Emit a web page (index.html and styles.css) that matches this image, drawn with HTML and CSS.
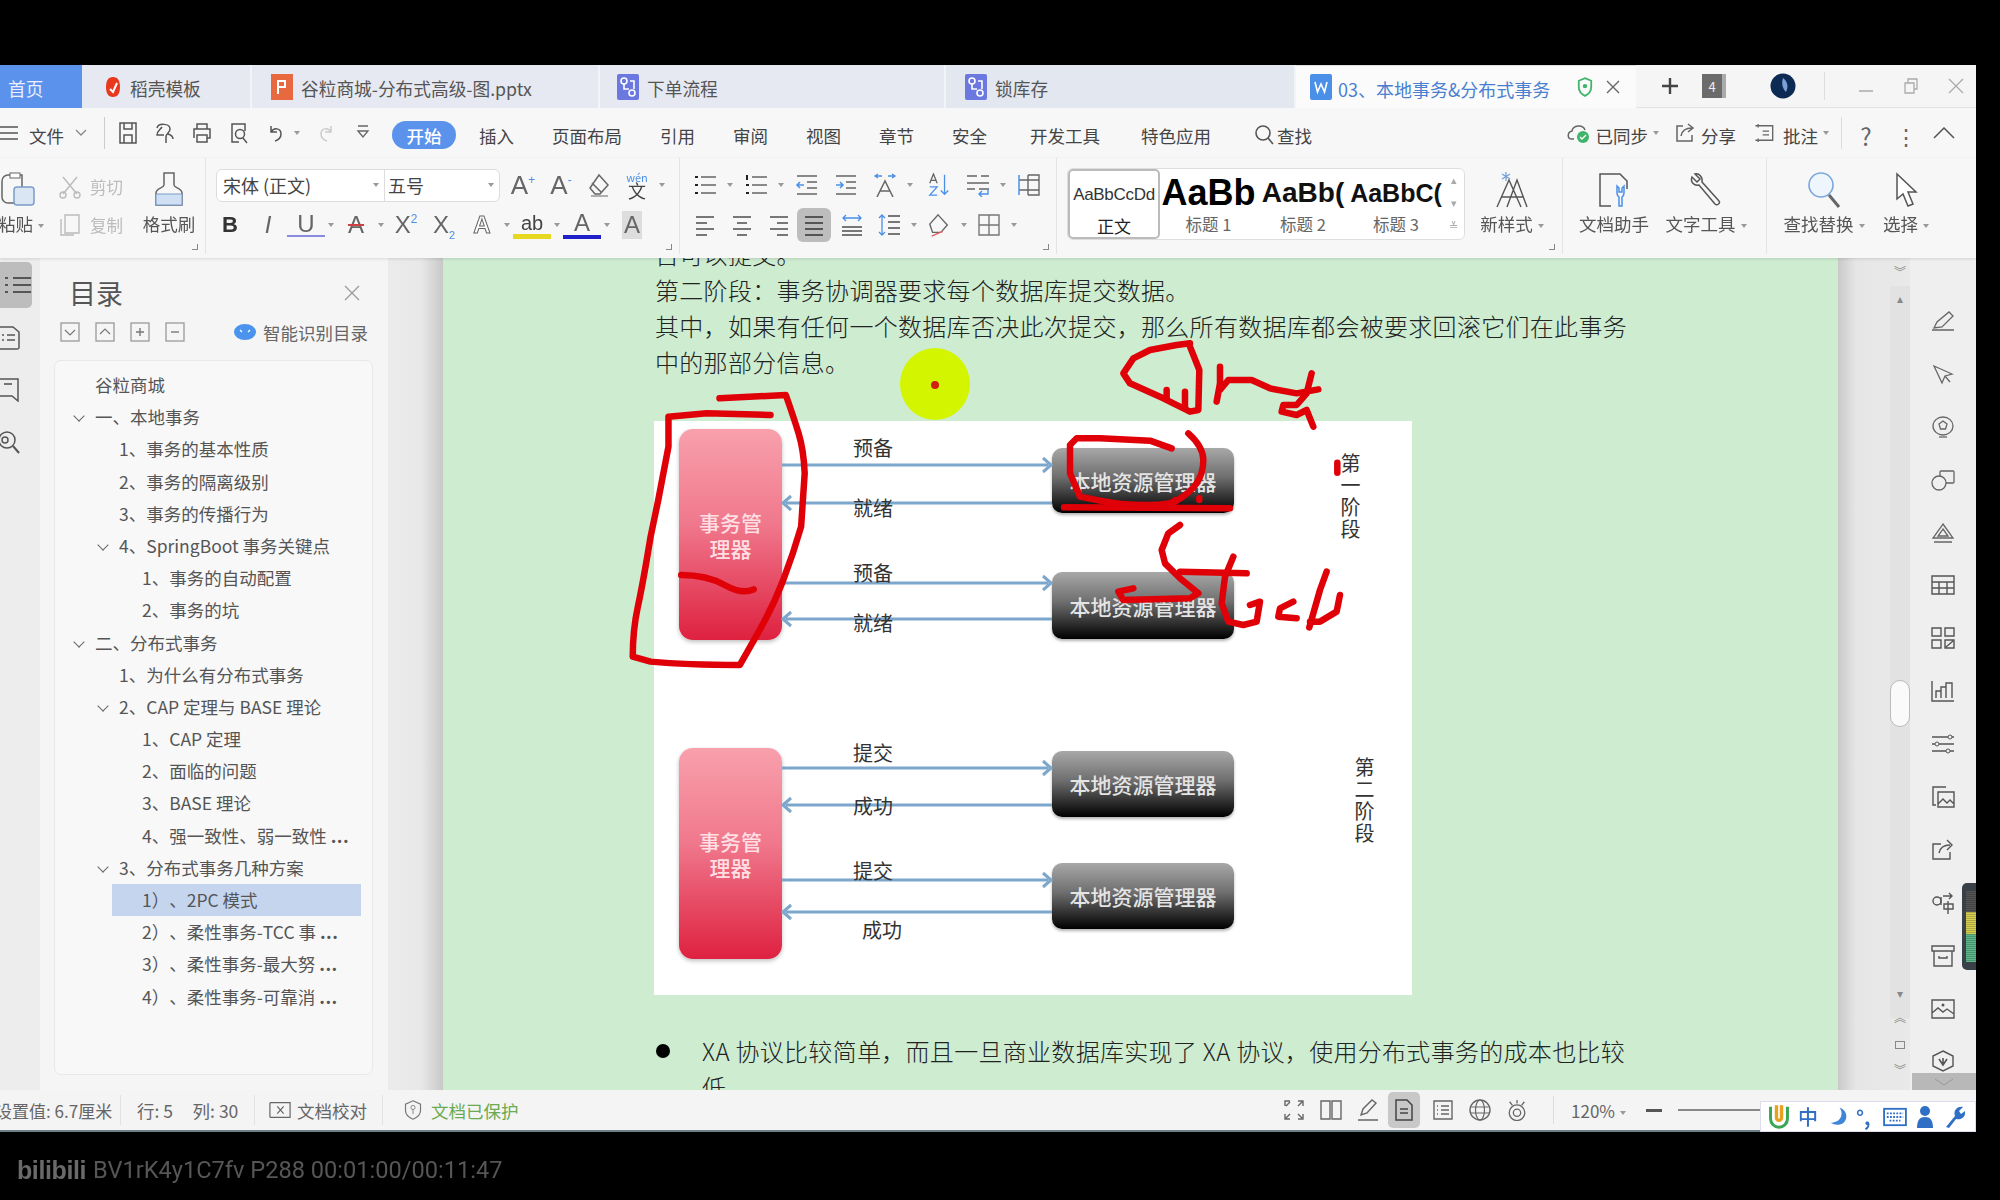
FILE: index.html
```html
<!DOCTYPE html>
<html lang="zh-CN">
<head>
<meta charset="utf-8">
<title>WPS</title>
<link rel="stylesheet" href="styles.css">
</head>
<body>
<div class="page">
  <div class="window">
    <div class="tabbar">
      <div class="tab home">首页</div>
      <div class="tab t2"><svg class="ti" viewBox="0 0 16 22"><path d="M8 1C3 1 1 5 1 11s2 10 7 10 7-4 7-10S13 1 8 1z" fill="#e8391f"/><path d="M5 13l3 3 4-9" fill="none" stroke="#fff" stroke-width="2"/></svg>稻壳模板</div>
      <div class="tab t3"><svg class="ti" viewBox="0 0 22 26"><rect width="22" height="26" fill="#e8693f"/><path d="M7 20V7h7v6H7" fill="none" stroke="#fff" stroke-width="2"/></svg>谷粒商城-分布式高级-图.pptx</div>
      <div class="tab t4"><svg class="ti" viewBox="0 0 22 26"><rect width="22" height="26" rx="2" fill="#6a78e0"/><circle cx="7" cy="7" r="3" fill="none" stroke="#fff" stroke-width="1.6"/><circle cx="15" cy="19" r="3" fill="none" stroke="#fff" stroke-width="1.6"/><path d="M7 10v5h5M13 7h4v8" fill="none" stroke="#fff" stroke-width="1.6"/></svg>下单流程</div>
      <div class="tab t5"><svg class="ti" viewBox="0 0 22 26"><rect width="22" height="26" rx="2" fill="#6a78e0"/><circle cx="7" cy="7" r="3" fill="none" stroke="#fff" stroke-width="1.6"/><circle cx="15" cy="19" r="3" fill="none" stroke="#fff" stroke-width="1.6"/><path d="M7 10v5h5M13 7h4v8" fill="none" stroke="#fff" stroke-width="1.6"/></svg>锁库存</div>
      <div class="tab active"><svg class="ti" viewBox="0 0 22 26"><rect width="22" height="26" rx="2" fill="#4a90e8"/><path d="M5 8l2.5 10L11 10l3.5 8L17 8" fill="none" stroke="#fff" stroke-width="1.6"/></svg><span class="atext">03、本地事务&amp;分布式事务</span><svg class="shield" viewBox="0 0 18 22"><path d="M9 1l7 3v7c0 5-3 8-7 10-4-2-7-5-7-10V4z" fill="none" stroke="#3fb56b" stroke-width="2"/><circle cx="9" cy="10" r="2.5" fill="#3fb56b"/></svg><svg class="tx" viewBox="0 0 16 16"><path d="M2 2l12 12M14 2L2 14" stroke="#666" stroke-width="1.4"/></svg></div>
      <div class="tabtools">
        <svg class="plus" viewBox="0 0 18 18"><path d="M9 1v16M1 9h16" stroke="#444" stroke-width="2.4"/></svg>
        <span class="count">4</span>
        <svg class="avatar" viewBox="0 0 26 26"><circle cx="13" cy="13" r="12.5" fill="#0d2a55"/><path d="M13 5c4 3 6 8 3 14-3-3-5-8-3-14z" fill="#7aa2d8"/></svg>
        <span class="vr"></span>
        <svg class="wmin" viewBox="0 0 16 16"><path d="M1 13h14" stroke="#aaa" stroke-width="1.5"/></svg>
        <svg class="wres" viewBox="0 0 16 16"><path d="M2 5h9v10H2zM5 5V1h9v10h-3" fill="none" stroke="#aaa" stroke-width="1.3"/></svg>
        <svg class="wcl" viewBox="0 0 16 16"><path d="M1 1l14 14M15 1L1 15" stroke="#aaa" stroke-width="1.3"/></svg>
      </div>
    </div>

    <div class="menubar">
      <svg class="burger" viewBox="0 0 18 14"><path d="M0 1h18M0 7h18M0 13h18" stroke="#555" stroke-width="1.5"/></svg>
      <span class="file">文件</span>
      <svg class="chev" viewBox="0 0 12 8"><path d="M1 1l5 5 5-5" fill="none" stroke="#888" stroke-width="1.3"/></svg>
      <span class="vr menu-vr"></span>
      <span class="q"><svg viewBox="0 0 20 22" class="qi"><path d="M2 1h16v20H2zM6 1v6h8V1M6 21v-8h8v8" fill="none" stroke="#555" stroke-width="1.5"/></svg></span>
      <span class="q"><svg viewBox="0 0 20 22" class="qi"><path d="M2 6c1-5 13-5 13 1 0 4-4 4-4 8v6M7 5c-2 3-5 4-5 8h7M13 12c3 1 5 2 5 5" fill="none" stroke="#555" stroke-width="1.5"/></svg></span>
      <span class="q"><svg viewBox="0 0 20 22" class="qi"><path d="M5 7V2h10v5M2 16V7h16v9h-3M5 13h10v7H5z" fill="none" stroke="#555" stroke-width="1.5"/></svg></span>
      <span class="q"><svg viewBox="0 0 20 22" class="qi"><path d="M16 9V2H3v18h7" fill="none" stroke="#555" stroke-width="1.5"/><circle cx="11" cy="12" r="4.5" fill="none" stroke="#555" stroke-width="1.5"/><path d="M14 16l4 5" stroke="#555" stroke-width="1.5"/></svg></span>
      <span class="q"><svg viewBox="0 0 20 22" class="qi"><path d="M5 4v6h6M5 10c3-5 10-4 10 2 0 4-3 6-6 7" fill="none" stroke="#555" stroke-width="1.5"/></svg></span>
      <span class="caret cq"></span>
      <span class="q"><svg viewBox="0 0 20 22" class="qi"><path d="M15 4v6H9M15 10c-3-5-10-4-10 2 0 4 3 6 6 7" fill="none" stroke="#ccc" stroke-width="1.5"/></svg></span>
      <span class="q"><svg viewBox="0 0 14 18" class="qs"><path d="M2 2h10M2 7l5 6 5-6z" fill="none" stroke="#666" stroke-width="1.3"/></svg></span>
      <span class="pill">开始</span>
      <nav class="mitems">
        <span>插入</span><span>页面布局</span><span>引用</span><span>审阅</span><span>视图</span><span>章节</span><span>安全</span><span class="mdev">开发工具</span><span class="mfeat">特色应用</span>
        <span class="findm"><svg viewBox="0 0 20 22" class="qi"><circle cx="9" cy="9" r="7" fill="none" stroke="#555" stroke-width="1.6"/><path d="M14 14l5 6" stroke="#555" stroke-width="1.6"/></svg>查找</span>
      </nav>
      <div class="mright">
        <svg class="cloud" viewBox="0 0 26 22"><path d="M7 17H5c-5 0-5-7 0-8 1-6 11-7 13-1" fill="none" stroke="#666" stroke-width="1.5"/><circle cx="16" cy="15" r="6" fill="#3fb56b"/><path d="M13 15l2 2 4-4" fill="none" stroke="#fff" stroke-width="1.4"/></svg>
        <span>已同步</span><span class="caret"></span>
        <svg class="mri share" viewBox="0 0 20 20"><path d="M8 3H2v15h15v-6M6 13c1-6 5-8 11-8M13 1l5 4-5 4" fill="none" stroke="#666" stroke-width="1.5"/></svg>
        <span>分享</span>
        <svg class="mri note" viewBox="0 0 24 22"><path d="M5 3h16v16H5M2 3h6M2 19h6M5 1v4M5 17v4M10 9h7M10 13h7" fill="none" stroke="#666" stroke-width="1.5"/></svg>
        <span>批注</span><span class="caret"></span>
        <span class="vr mr-vr"></span>
        <span class="help">?</span>
        <span class="dots">⋮</span>
        <svg class="up" viewBox="0 0 22 12"><path d="M1 11L11 1l10 10" fill="none" stroke="#555" stroke-width="1.5"/></svg>
      </div>
    </div>

    <div class="toolbar">
      <section class="grp g-clip">
        <div class="bigbtn paste">
          <svg viewBox="0 0 36 34" class="bigi"><path d="M8 3h14v28H8a6 6 0 0 1-6-6V9a6 6 0 0 1 6-6z" fill="none" stroke="#666" stroke-width="1.5"/><rect x="10" y="1" width="10" height="5" fill="#fff" stroke="#666"/><rect x="14" y="15" width="20" height="18" rx="3" fill="#dbe6f5" stroke="#7a9cc8" stroke-width="1.5"/></svg>
          <span class="clipl">粘贴<i class="caret"></i></span>
        </div>
        <div class="cc">
          <div class="ccrow"><svg viewBox="0 0 24 24" class="cci"><path d="M5 2l14 17M19 2L5 19" stroke="#bbb" stroke-width="1.4"/><circle cx="5" cy="20" r="3" fill="none" stroke="#bbb" stroke-width="1.4"/><circle cx="19" cy="20" r="3" fill="none" stroke="#bbb" stroke-width="1.4"/></svg>剪切</div>
          <div class="ccrow"><svg viewBox="0 0 24 24" class="cci"><path d="M7 2h14v18H7z M3 6v16h13" fill="none" stroke="#bbb" stroke-width="1.4"/></svg>复制</div>
        </div>
        <div class="bigbtn brush">
          <svg viewBox="0 0 32 34" class="bigi"><path d="M11 1h10v12c0 3 8 3 8 8v12H3V21c0-5 8-5 8-8z" fill="none" stroke="#666" stroke-width="1.5"/><path d="M3 22h26v11H3z" fill="#cfe0f5" stroke="#7a9cc8"/></svg>
          <span>格式刷</span>
        </div>
        <i class="launch"></i>
      </section>

      <section class="grp g-font">
        <div class="row">
          <div class="combo"><span class="cf">宋体 (正文)<i class="caret"></i></span><span class="cs">五号<i class="caret"></i></span></div>
          <span class="b"><span class="gl a">A<sup>+</sup></span></span>
          <span class="b"><span class="gl a">A<sup>-</sup></span></span>
          <span class="b"><svg viewBox="0 0 24 24" class="i"><path d="M12 2l9 10-8 9H8l-5-6z M5 10l9 9" fill="none" stroke="#666" stroke-width="1.5"/><path d="M4 23h17" stroke="#666"/></svg></span>
          <span class="b dd"><span class="wen"><small>wén</small>文</span><i class="caret"></i></span>
        </div>
        <div class="row">
          <span class="b"><b class="gl">B</b></span>
          <span class="b"><em class="gl it">I</em></span>
          <span class="b dd"><span class="gl ul">U</span><i class="caret"></i></span>
          <span class="b dd"><span class="gl strike">A</span><i class="caret"></i></span>
          <span class="b"><span class="gl">X<sup class="bl">2</sup></span></span>
          <span class="b"><span class="gl">X<sub class="bl">2</sub></span></span>
          <span class="b dd"><span class="gl outl">A</span><i class="caret"></i></span>
          <span class="b dd"><span class="gl ab">ab</span><i class="caret"></i></span>
          <span class="b dd"><span class="gl blue">A</span><i class="caret"></i></span>
          <span class="b"><span class="gl shade">A</span></span>
        </div>
        <i class="launch"></i>
      </section>

      <section class="grp g-para">
        <div class="row gap1">
          <span class="b dd"><svg viewBox="0 0 24 24" class="i"><path d="M8 4h15M8 12h15M8 20h15" stroke="#666" stroke-width="1.5"/><path d="M2 4h3M2 12h3M2 20h3" stroke="#222" stroke-width="2.2"/></svg><i class="caret"></i></span>
          <span class="b dd"><svg viewBox="0 0 24 24" class="i"><path d="M8 4h15M8 12h15M8 20h15" stroke="#666" stroke-width="1.5"/><path d="M3 2v5M2 12h3M2 20h3" stroke="#222" stroke-width="2"/></svg><i class="caret"></i></span>
          <span class="b"><svg viewBox="0 0 24 24" class="i"><path d="M2 3h20M12 9h10M12 15h10M2 21h20" stroke="#666" stroke-width="1.5"/><path d="M9 12H2M5 9l-3 3 3 3" fill="none" stroke="#4a90e8" stroke-width="1.5"/></svg></span>
          <span class="b"><svg viewBox="0 0 24 24" class="i"><path d="M2 3h20M12 9h10M12 15h10M2 21h20" stroke="#666" stroke-width="1.5"/><path d="M2 12h7M6 9l3 3-3 3" fill="none" stroke="#4a90e8" stroke-width="1.5"/></svg></span>
          <span class="b dd"><svg viewBox="0 0 24 24" class="i"><path d="M4 24L12 8l8 16M7 18h10" fill="none" stroke="#666" stroke-width="1.5"/><path d="M2 3h7M5 1l-3 2 3 2M22 3h-7M19 1l3 2-3 2" fill="none" stroke="#4a90e8" stroke-width="1.3"/></svg><i class="caret"></i></span>
          <span class="b psort"><svg viewBox="0 0 24 26" class="i"><path d="M2 11L6 1l4 10M3 8h6" fill="none" stroke="#666" stroke-width="1.4"/><path d="M2 15h8l-8 9h8" fill="none" stroke="#4a90e8" stroke-width="1.4"/><path d="M18 2v21M14 19l4 4 4-4" fill="none" stroke="#4a90e8" stroke-width="1.4"/></svg></span>
          <span class="b dd"><svg viewBox="0 0 24 24" class="i"><path d="M1 3h10M15 3h8M1 10h22M1 16h8M13 16h10" stroke="#666" stroke-width="1.5"/><path d="M22 16v5H13M16 18l-3 3 3 3" fill="none" stroke="#4a90e8" stroke-width="1.4"/></svg><i class="caret"></i></span>
          <span class="b"><svg viewBox="0 0 24 24" class="i"><path d="M11 2h11v20H11M2 7h20M2 17h20M11 2v20" fill="none" stroke="#666" stroke-width="1.4"/><path d="M2 2v20" stroke="#4a90e8" stroke-width="1.5"/></svg></span>
        </div>
        <div class="row pr2">
          <span class="b"><svg viewBox="0 0 24 24" class="i"><path d="M3 4h18M3 10h11M3 16h18M3 22h11" stroke="#777" stroke-width="2"/></svg></span>
          <span class="b"><svg viewBox="0 0 24 24" class="i"><path d="M3 4h18M7 10h10M3 16h18M7 22h10" stroke="#777" stroke-width="2"/></svg></span>
          <span class="b"><svg viewBox="0 0 24 24" class="i"><path d="M3 4h18M10 10h11M3 16h18M10 22h11" stroke="#777" stroke-width="2"/></svg></span>
          <span class="b sel"><svg viewBox="0 0 24 24" class="i"><path d="M3 4h18M3 10h18M3 16h18M3 22h18" stroke="#555" stroke-width="2.2"/></svg></span>
          <span class="b"><svg viewBox="0 0 24 24" class="i"><path d="M2 14h20M2 18h20M2 22h20" stroke="#777" stroke-width="1.8"/><path d="M3 5h18M6 2L3 5l3 3M18 2l3 3-3 3" fill="none" stroke="#4a90e8" stroke-width="1.3"/></svg></span>
          <span class="b dd"><svg viewBox="0 0 24 24" class="i"><path d="M11 3h12M11 9h12M11 15h12M11 21h12" stroke="#777" stroke-width="1.8"/><path d="M5 2v20M2 5l3-3 3 3M2 19l3 3 3-3" fill="none" stroke="#4a90e8" stroke-width="1.3"/></svg><i class="caret"></i></span>
          <span class="b dd"><svg viewBox="0 0 24 26" class="i"><path d="M11 2l10 11-7 8H5l-3-9z" fill="none" stroke="#666" stroke-width="1.5"/><path d="M4 25l12-5" stroke="#e06060" stroke-width="1.5"/></svg><i class="caret"></i></span>
          <span class="b dd"><svg viewBox="0 0 24 24" class="i"><path d="M2 2h20v20H2zM2 12h20M12 2v20" fill="none" stroke="#777" stroke-width="1.4"/></svg><i class="caret"></i></span>
        </div>
        <i class="launch"></i>
      </section>

      <section class="grp g-styles">
        <div class="gallery">
          <div class="st st0"><span class="smp s0">AaBbCcDd</span><span class="sl dark">正文</span></div>
          <div class="st st1"><span class="smp s1">AaBb</span><span class="sl">标题 1</span></div>
          <div class="st st2"><span class="smp s2">AaBb(</span><span class="sl">标题 2</span></div>
          <div class="st st3"><span class="smp s3">AaBbC(</span><span class="sl">标题 3</span></div>
          <div class="gscroll"><span>▴</span><span>▾</span><span>≚</span></div>
        </div>
        <div class="bigbtn newst">
          <svg viewBox="0 0 40 36" class="bigi"><path d="M5 35L17 8l12 27M9 25h16M15 35L25 8l10 27M20 25h12" fill="none" stroke="#555" stroke-width="1.4"/><path d="M14 0v9M10 2l8 5M18 2l-8 5" stroke="#6fa0d8" stroke-width="1.2"/></svg>
          <span>新样式<i class="caret"></i></span>
        </div>
        <i class="launch"></i>
      </section>

      <section class="grp g-tools">
        <div class="bigbtn w85">
          <svg viewBox="0 0 34 36" class="bigi"><path d="M14 34H3V2h20l7 7v8" fill="none" stroke="#555" stroke-width="1.5"/><path d="M20 14v7a5 5 0 0 0 2 4v9h3v-9a5 5 0 0 0 2-4v-7l-2 2v4h-3v-4z" fill="none" stroke="#4a90e8" stroke-width="1.5"/></svg>
          <span>文档助手</span>
        </div>
        <div class="bigbtn w85">
          <svg viewBox="0 0 34 36" class="bigi"><path d="M6 2l5 5-3 3-5-5c-2 5 2 9 7 8l16 19c2 2 6-1 4-3L13 10c1-5-3-9-7-8z" fill="none" stroke="#555" stroke-width="1.5"/></svg>
          <span>文字工具<i class="caret"></i></span>
        </div>
      </section>

      <section class="grp g-find">
        <div class="bigbtn w85">
          <svg viewBox="0 0 34 36" class="bigi"><circle cx="14" cy="13" r="12" fill="#eef5fd" stroke="#7aa7dc" stroke-width="1.6"/><path d="M22 23l10 12" stroke="#666" stroke-width="3"/></svg>
          <span>查找替换<i class="caret"></i></span>
        </div>
        <div class="bigbtn w75">
          <svg viewBox="0 0 26 36" class="bigi"><path d="M4 2v25l6-5 5 12 5-2-5-12h8z" fill="#fff" stroke="#555" stroke-width="1.5"/></svg>
          <span>选择<i class="caret"></i></span>
        </div>
      </section>
    </div>

    <div class="main">
      <aside class="rail">
        <div class="rb on"><svg viewBox="0 0 26 20" class="ri"><path d="M8 3h18M8 10h18M8 17h18M0 3h3M0 10h3M0 17h3" stroke="#333" stroke-width="1.6"/></svg></div>
        <div class="rb rb1"><svg viewBox="0 0 20 24" class="ri"><path d="M0 1h13l6 5v16a2 2 0 0 1-2 1H0" fill="none" stroke="#555" stroke-width="1.5"/><path d="M7 9h8M7 14h8M2 9h2M2 14h2" stroke="#555" stroke-width="1.6"/></svg></div>
        <div class="rb"><svg viewBox="0 0 20 24" class="ri"><path d="M0 1h18v22l-6-5H0" fill="none" stroke="#555" stroke-width="1.5"/><path d="M4 6h8" stroke="#555" stroke-width="1.6"/></svg></div>
        <div class="rb"><svg viewBox="0 0 20 24" class="ri"><circle cx="7" cy="10" r="8" fill="none" stroke="#555" stroke-width="1.5"/><circle cx="5" cy="10" r="3" fill="none" stroke="#555" stroke-width="1.5"/><path d="M13 16l6 7" stroke="#555" stroke-width="2"/></svg></div>
      </aside>
      <aside class="panel">
        <div class="phead"><span class="ptitle">目录</span><svg class="pclose" viewBox="0 0 16 16"><path d="M1 1l14 14M15 1L1 15" stroke="#999" stroke-width="1.2"/></svg></div>
        <div class="ptools">
          <svg class="pt" viewBox="0 0 20 20"><rect x="1" y="1" width="18" height="18" fill="none" stroke="#999" stroke-width="1.3"/><path d="M5 8l5 5 5-5" fill="none" stroke="#777" stroke-width="1.2"/></svg>
          <svg class="pt" viewBox="0 0 20 20"><rect x="1" y="1" width="18" height="18" fill="none" stroke="#999" stroke-width="1.3"/><path d="M5 12l5-5 5 5" fill="none" stroke="#777" stroke-width="1.2"/></svg>
          <svg class="pt" viewBox="0 0 20 20"><rect x="1" y="1" width="18" height="18" fill="none" stroke="#999" stroke-width="1.3"/><path d="M6 10h8M10 6v8" stroke="#777" stroke-width="1.4"/></svg>
          <svg class="pt" viewBox="0 0 20 20"><rect x="1" y="1" width="18" height="18" fill="none" stroke="#999" stroke-width="1.3"/><path d="M6 10h8" stroke="#777" stroke-width="1.4"/></svg>
          <span class="smart"><svg class="blob" viewBox="0 0 22 16"><ellipse cx="11" cy="8" rx="11" ry="8" fill="#4a94ee"/><path d="M6 6l2 2M16 6l-2 2" stroke="#fff" stroke-width="1.3"/></svg>智能识别目录</span>
        </div>
        <div class="tree">
          <div class="node l0">谷粒商城</div>
          <div class="node l0 op">一、本地事务</div>
          <div class="node l1">1、事务的基本性质</div>
          <div class="node l1">2、事务的隔离级别</div>
          <div class="node l1">3、事务的传播行为</div>
          <div class="node l1 op">4、SpringBoot 事务关键点</div>
          <div class="node l2">1、事务的自动配置</div>
          <div class="node l2">2、事务的坑</div>
          <div class="node l0 op">二、分布式事务</div>
          <div class="node l1">1、为什么有分布式事务</div>
          <div class="node l1 op">2、CAP 定理与 BASE 理论</div>
          <div class="node l2">1、CAP 定理</div>
          <div class="node l2">2、面临的问题</div>
          <div class="node l2">3、BASE 理论</div>
          <div class="node l2">4、强一致性、弱一致性 <b>...</b></div>
          <div class="node l1 op">3、分布式事务几种方案</div>
          <div class="node l2 cur">1）、2PC 模式</div>
          <div class="node l2">2）、柔性事务-TCC 事 <b>...</b></div>
          <div class="node l2">3）、柔性事务-最大努 <b>...</b></div>
          <div class="node l2">4）、柔性事务-可靠消 <b>...</b></div>
        </div>
      </aside>
      <div class="gutter"></div>
      <div class="doc">
        <p class="ln">否可以提交。</p>
        <p class="ln">第二阶段：事务协调器要求每个数据库提交数据。</p>
        <p class="ln">其中，如果有任何一个数据库否决此次提交，那么所有数据库都会被要求回滚它们在此事务</p>
        <p class="ln">中的那部分信息。</p>
        <div class="fig">
          <div class="mgr m1">事务管<br>理器</div>
          <div class="mgr m2">事务管<br>理器</div>
          <div class="res r1">本地资源管理器</div>
          <div class="res r2">本地资源管理器</div>
          <div class="res r3">本地资源管理器</div>
          <div class="res r4">本地资源管理器</div>
          <svg class="arrows" viewBox="0 0 758 573">
            <g fill="none" stroke="#7da6cc" stroke-width="3">
              <path d="M128 44h266M128 162h266M128 347h266M128 459h266M132 82h266M132 198h266M132 384h266M132 491h266"/>
              <path d="M389 37l8 7-8 7M389 155l8 7-8 7M389 340l8 7-8 7M389 452l8 7-8 7M137 75l-8 7 8 7M137 191l-8 7 8 7M137 377l-8 7 8 7M137 484l-8 7 8 7"/>
            </g>
          </svg>
          <span class="lb a1">预备</span><span class="lb a2">就绪</span><span class="lb a3">预备</span><span class="lb a4">就绪</span>
          <span class="lb a5">提交</span><span class="lb a6">成功</span><span class="lb a7">提交</span><span class="lb a8">成功</span>
          <span class="ph p1">第一阶段</span>
          <span class="ph p2">第二阶段</span>
        </div>
        <div class="li"><i class="dot"></i><p class="ln">XA 协议比较简单，而且一旦商业数据库实现了 XA 协议，使用分布式事务的成本也比较<br>低</p></div>
      </div>
      <div class="vbar">
        <span class="sa sat">︾</span>
        <div class="track">
          <span class="sa sa0">▴</span>
          <span class="thumb"></span>
          <span class="sa sa1">▾</span>
          <span class="sa sa2">︽</span>
          <span class="sa sa3"></span>
          <span class="sa sa4">︾</span>
        </div>
      </div>
      <aside class="rtools">
        <i class="rline"></i>
        <svg class="rt" viewBox="0 0 24 22"><path d="M1 20h22M3 18l3-6L18 2l4 4-11 11z" fill="none" stroke="#666" stroke-width="1.3"/></svg>
        <svg class="rt" viewBox="0 0 24 22"><path d="M3 3l18 8-7 2-3 7z M14 13l5 6" fill="none" stroke="#666" stroke-width="1.3"/></svg>
        <svg class="rt" viewBox="0 0 24 22"><ellipse cx="12" cy="10" rx="10" ry="9" fill="none" stroke="#666" stroke-width="1.3"/><path d="M12 5l4 3-1.5 5h-5L8 8z" fill="none" stroke="#666" stroke-width="1.3"/><path d="M8 21h8" stroke="#666" stroke-width="1.3"/></svg>
        <svg class="rt" viewBox="0 0 24 22"><rect x="9" y="2" width="14" height="12" rx="1" fill="none" stroke="#666" stroke-width="1.3"/><circle cx="8" cy="14" r="7" fill="#f0f0f0" stroke="#666" stroke-width="1.3"/></svg>
        <svg class="rt" viewBox="0 0 24 22"><path d="M12 2L22 16H2zM12 7l5 7H7zM3 20h18" fill="none" stroke="#666" stroke-width="1.3"/></svg>
        <svg class="rt" viewBox="0 0 24 22"><path d="M1 2h22v18H1zM1 8h22M1 14h22M8 8v12M16 8v12" fill="none" stroke="#555" stroke-width="1.4"/></svg>
        <svg class="rt" viewBox="0 0 24 22"><path d="M1 1h9v8H1zM14 1h9v8h-9zM1 13h9v8H1zM14 13h9v8h-9zM15 20l7-6" fill="none" stroke="#555" stroke-width="1.4"/></svg>
        <svg class="rt" viewBox="0 0 24 22"><path d="M1 1v20h22M5 18v-7h5v7M10 18V7h5v11M15 18V3h6v15" fill="none" stroke="#555" stroke-width="1.4"/></svg>
        <svg class="rt" viewBox="0 0 24 22"><path d="M1 4h16M21 4h2M1 11h3M8 11h15M1 18h14M19 18h4" stroke="#555" stroke-width="1.3"/><circle cx="19" cy="4" r="2" fill="none" stroke="#555"/><circle cx="6" cy="11" r="2" fill="none" stroke="#555"/><circle cx="17" cy="18" r="2" fill="none" stroke="#555"/></svg>
        <svg class="rt" viewBox="0 0 24 22"><path d="M15 1H2v18h3M7 6h16v15H7zM7 18l5-5 4 4 3-3 4 4" fill="none" stroke="#555" stroke-width="1.4"/></svg>
        <svg class="rt" viewBox="0 0 24 22"><path d="M10 5H2v15h17v-7M8 14c1-5 5-8 11-8M16 1l5 5-5 5" fill="none" stroke="#555" stroke-width="1.4"/></svg>
        <svg class="rt" viewBox="0 0 24 22"><circle cx="6" cy="9" r="4" fill="none" stroke="#555" stroke-width="1.4"/><path d="M10 5v8M12 4h9M18 1l3 3-3 3M13 12h9v5h-9zM17 9v13" fill="none" stroke="#555" stroke-width="1.4"/></svg>
        <svg class="rt" viewBox="0 0 24 22"><path d="M1 1h22v5H1zM3 6v15h18V6M8 11v2h8v-2" fill="none" stroke="#555" stroke-width="1.4"/></svg>
        <svg class="rt" viewBox="0 0 24 22"><path d="M1 2h22v18H1zM1 15l6-5 5 4 4-3 7 5" fill="none" stroke="#555" stroke-width="1.4"/><circle cx="12" cy="7" r="1.5" fill="#555"/></svg>
        <svg class="rt" viewBox="0 0 24 22"><path d="M12 1l10 5v10l-10 5-10-5V6z" fill="none" stroke="#555" stroke-width="1.4"/><path d="M8 9l4 6 4-6M12 8v7" fill="none" stroke="#555" stroke-width="1.6"/></svg>
        <div class="rmore"><svg viewBox="0 0 20 8" class="rmi"><path d="M1 1l9 6 9-6" fill="none" stroke="#999"/></svg></div>
      </aside>
    </div>

    <div class="status">
      <span class="si first">设置值: 6.7厘米</span>
      <span class="si">行: 5 &nbsp;&nbsp;&nbsp; 列: 30</span>
      <span class="si"><svg class="sti" viewBox="0 0 24 18"><path d="M1 1h22v16H1M1 1v16M9 5l7 8M16 5l-7 8" fill="none" stroke="#666" stroke-width="1.3"/></svg>文档校对</span>
      <span class="si last"><svg class="sti" viewBox="0 0 22 24"><path d="M11 1l9 4v8c0 5-4 8-9 10-5-2-9-5-9-10V5z" fill="none" stroke="#777" stroke-width="1.4"/><circle cx="11" cy="9" r="2.5" fill="none" stroke="#777"/><path d="M11 12v5" stroke="#777"/></svg><em class="ok">文档已保护</em></span>
      <div class="sright">
        <svg class="vi" viewBox="0 0 22 22"><path d="M7 2H2v5M15 2h5v5M7 20H2v-5M15 20h5v-5M3 7l4-4M19 3l-4 4M3 19l4-4M19 19l-4-4" fill="none" stroke="#666" stroke-width="1.4"/></svg>
        <svg class="vi" viewBox="0 0 22 22"><path d="M1 2h9v18H1zM12 2h9v18h-9z" fill="none" stroke="#666" stroke-width="1.4"/></svg>
        <svg class="vi" viewBox="0 0 22 22"><path d="M4 16l2-6 9-9 4 3-9 10zM1 21h20" fill="none" stroke="#666" stroke-width="1.4"/></svg>
        <span class="vis"><svg class="vi2" viewBox="0 0 22 22"><path d="M3 1h11l5 5v15H3zM7 10h8M7 14h8" fill="none" stroke="#444" stroke-width="1.5"/></svg></span>
        <svg class="vi" viewBox="0 0 22 22"><path d="M2 2h18v18H2zM9 7h8M9 11h8M9 15h8M5 7h1M5 11h1M5 15h1" fill="none" stroke="#666" stroke-width="1.4"/></svg>
        <svg class="vi" viewBox="0 0 22 22"><circle cx="11" cy="11" r="10" fill="none" stroke="#666" stroke-width="1.4"/><ellipse cx="11" cy="11" rx="4.5" ry="10" fill="none" stroke="#666" stroke-width="1.2"/><path d="M1 8h20M1 14h20" stroke="#666" stroke-width="1.2"/></svg>
        <svg class="vi" viewBox="0 0 22 24"><circle cx="11" cy="15" r="8.5" fill="none" stroke="#666" stroke-width="1.4"/><circle cx="11" cy="15" r="4" fill="none" stroke="#666" stroke-width="1.4"/><path d="M11 1v4M3 3l3 4M19 3l-3 4" stroke="#666" stroke-width="1.4"/></svg>
        <span class="vr st-vr"></span>
        <span class="zoom">120%<i class="caret"></i></span>
        <i class="minus"></i>
        <i class="zline"></i>
      </div>
    </div>
  </div>

  <div class="ime">
    <svg class="ime-u" viewBox="0 0 26 30"><path d="M3 3v14a10 10 0 0 0 20 0V3" fill="none" stroke="#3aa655" stroke-width="3.5"/><path d="M10 1v15a3 3 0 0 0 6 0V1" fill="none" stroke="#e8a020" stroke-width="4"/></svg>
    <span class="ime-z">中</span>
    <svg class="ime-i im1" viewBox="0 0 22 24"><path d="M13 1c5 7 2 18-11 18 8 5 19 2 19-8 0-5-4-9-8-10z" fill="#3f86d8"/></svg>
    <span class="ime-p">°,</span>
    <svg class="ime-i im2" viewBox="0 0 26 22"><rect x="1" y="2" width="24" height="18" fill="none" stroke="#2f6fc4" stroke-width="2"/><path d="M4 7h18M4 11h18M7 15h12" stroke="#2f6fc4" stroke-width="2" stroke-dasharray="2 1.5"/></svg>
    <svg class="ime-i im3" viewBox="0 0 22 24"><circle cx="11" cy="6" r="5" fill="#2f6fc4"/><path d="M3 23c0-8 3-11 8-11s8 3 8 11z" fill="#2f6fc4"/></svg>
    <svg class="ime-i im3" viewBox="0 0 22 24"><path d="M3 22l9-11c-2-5 2-10 8-9l-4 4 2 3 4-3c1 6-4 9-9 8l-7 9z" fill="#2f6fc4"/></svg>
  </div>

  <div class="meter"><i class="mbar"></i></div>

  <svg class="ink" viewBox="0 0 2000 1200">
    <ellipse cx="935" cy="384" rx="35" ry="36" fill="#d3f500"/>
    <circle cx="935" cy="385" r="4" fill="#d02010"/>
    <g class="ink-lines">
      <g transform="translate(620 260) scale(.5102 .3333)">
        <path vector-effect="non-scaling-stroke" d="M195 415L325 405Q340 470 350 520T362 640L355 800Q340 880 320 960T270 1120L235 1215Q130 1215 60 1205L25 1190Q25 1110 35 1040T60 830L75 720Q85 640 95 560L95 470L170 460L295 465"/>
        <path vector-effect="non-scaling-stroke" d="M120 945Q170 945 205 975T262 988"/>
      </g>
      <g transform="translate(1100 330) scale(.3333)">
        <path vector-effect="non-scaling-stroke" d="M270 40L230 45L150 60L100 85L70 130L90 160L190 205L270 245L295 240L298 120L270 50"/>
        <path vector-effect="non-scaling-stroke" d="M200 180V205M255 185V235"/>
        <path vector-effect="non-scaling-stroke" d="M360 110L360 160L350 215M360 180L385 150L455 150L510 175L590 190L655 178"/>
        <path vector-effect="non-scaling-stroke" d="M635 130L620 190L590 225L550 225L545 245L590 255L620 240L640 290"/>
        <path vector-effect="non-scaling-stroke" d="M215 355L150 332L0 325L-70 325L-90 345L-90 430L-60 500L0 512Q60 525 140 525T225 510M265 310Q310 350 310 390T290 460T225 515"/>
        <path vector-effect="non-scaling-stroke" d="M-108 532L390 535M298 505V510"/>
        <path vector-effect="non-scaling-stroke" d="M712 398V428"/>
      </g>
      <g transform="translate(1100 510) scale(.3333)">
        <path vector-effect="non-scaling-stroke" d="M240 45L205 70L185 120L195 160L240 205L295 250L270 265L70 270L55 245L100 235"/>
        <path vector-effect="non-scaling-stroke" d="M240 185L440 190"/>
        <path vector-effect="non-scaling-stroke" d="M400 140L375 200L365 280L385 335L430 345L470 335L480 275L450 285"/>
        <path vector-effect="non-scaling-stroke" d="M580 275L540 295L535 320L590 325"/>
        <path vector-effect="non-scaling-stroke" d="M680 185L660 240L628 352M720 255L710 305L660 335L630 335"/>
      </g>
    </g>
  </svg>

  <footer class="wm"><span class="bl-logo">bilibili</span><span class="wm-t">BV1rK4y1C7fv P288 00:01:00/00:11:47</span></footer>
</div>
</body>
</html>
```

FILE: styles.css
```css
* { box-sizing: border-box; }
html, body { margin: 0; height: 100%; background: #000; overflow: hidden; }
body { font-family: "Noto Sans CJK SC", "Noto Sans", sans-serif; color: #555; text-spacing-trim: space-all; }
.page { position: relative; width: 2000px; height: 1200px; padding-top: 65px; filter: blur(.55px); }
.window { width: 1976px; height: 1067px; background: #f5f5f5; display: flex; flex-direction: column; overflow: hidden; }
svg { display: block; flex: none; }
i, em { font-style: normal; }
p { margin: 0; }

/* tabs */
.tabbar { height: 43px; display: flex; background: #f1f2f5; flex: none; }
.tab { height: 43px; display: flex; align-items: center; font-size: 17.7px; line-height: 26px; color: #555; background: #e6e9f1; border-right: 2px solid #f3f4f7; padding-left: 23px; padding-top: 3px; flex: none; }
.home { width: 82px; background: #5b93ec; color: #eef; padding-left: 8px; border: 0; }
.t2 { width: 170px; }
.t3 { width: 348px; padding-left: 19px; }
.t4 { width: 346px; padding-left: 17px; }
.t5 { width: 350px; padding-left: 19px; background: #e2e7f0; }
.active { width: 340px; background: #fbfbfb; padding-left: 14px; border: 0; border-top: 1px solid #ddd; color: #4a7fd0; }
.ti { width: 22px; height: 26px; margin-right: 8px; margin-top: -3px; }
.t2 .ti { width: 16px; height: 22px; margin-right: 9px; }
.atext { width: 238px; font-size: 18px; white-space: nowrap; margin-left: -2px; }
.shield { width: 16px; height: 20px; margin-top: -3px; margin-left: 1px; }
.tx { width: 16px; height: 16px; margin-left: 12px; margin-top: -3px; }
.tabtools { flex: 1; display: flex; align-items: center; background: #f5f5f5; border-bottom: 1px solid #e2e2e2; padding-left: 25px; }
.plus { width: 18px; height: 18px; }
.count { width: 24px; height: 24px; background: #6b6b6b; color: #eee; font-size: 13px; display: flex; align-items: center; justify-content: center; margin-left: 23px; border-right: 4px solid #aaa; }
.avatar { width: 26px; height: 26px; margin-left: 44px; }
.tabtools .vr { height: 28px; margin-left: 28px; }
.wmin { width: 16px; height: 16px; margin-left: 33px; }
.wres { width: 16px; height: 16px; margin-left: 29px; }
.wcl { width: 16px; height: 16px; margin-left: 29px; }
.vr { display: block; width: 1px; background: #ddd; flex: none; }

/* menu */
.menubar { height: 50px; display: flex; align-items: center; background: #f7f7f7; flex: none; font-size: 17.5px; color: #444; padding-top: 0; }
.menubar > span:not(.q):not(.vr):not(.caret), .mitems > span, .mright > span:not(.caret):not(.vr) { position: relative; top: 2px; }
.pill.pill { top: 0; }
.burger { width: 18px; height: 14px; margin-right: 11px; }
.file { width: 36px; white-space: nowrap; }
.chev { width: 12px; height: 8px; margin-left: 10px; }
.menu-vr { height: 32px; margin-left: 17px; margin-right: 4px; background: #ccc; }
.q { width: 37px; display: flex; justify-content: center; }
.qi { width: 20px; height: 22px; }
.qs { width: 14px; height: 18px; }
.caret { display: inline-block; width: 0; height: 0; border: 3px solid transparent; border-top: 4px solid #999; border-bottom: 0; flex: none; margin-left: 5px; vertical-align: middle; }
.cq { margin-left: 0; margin-right: 7px; }
.pill { width: 64px; height: 28px; margin-left: 11px; border-radius: 14px; background: #5b93ec; color: #fff; font-size: 17.5px; display: flex; align-items: center; justify-content: center; font-weight: 500; }
.mitems { display: flex; gap: 38px; margin-left: 23px; white-space: nowrap; }
.mdev { margin-left: 5px; }
.mfeat { margin-left: 3px; }
.mitems .findm { display: flex; align-items: center; gap: 3px; margin-left: 5px; }
.mright { margin-left: auto; display: flex; align-items: center; padding-right: 21px; font-size: 17.5px; white-space: nowrap; }
.cloud { width: 26px; height: 22px; margin-right: 3px; }
.mri { width: 20px; height: 20px; }
.share { margin-left: 16px; margin-right: 6px; }
.note { width: 25px; margin-left: 16px; margin-right: 6px; }
.mr-vr.mr-vr { height: 32px; margin-left: 12px; top: 0; }
.help { width: 20px; font-size: 24px; margin-left: 14px; text-align: center; color: #666; }
.dots { width: 20px; font-size: 22px; margin-left: 19px; text-align: center; color: #666; }
.up { width: 22px; height: 12px; margin-left: 18px; }

/* toolbar */
.toolbar { height: 100px; display: flex; background: #f7f7f7; flex: none; box-shadow: 0 1px 3px rgba(0,0,0,.12); position: relative; z-index: 2; font-size: 17px; }
.grp { position: relative; padding-top: 10px; flex: none; border-right: 1px solid #e4e4e4; height: 96px; }
.launch { position: absolute; right: 7px; bottom: 4px; width: 6px; height: 6px; border-right: 1px solid #888; border-bottom: 1px solid #888; }
.g-clip { width: 206px; display: flex; }
.g-font { width: 474px; padding-left: 7px; padding-top: 8px; }
.g-para { width: 377px; padding-left: 6px; padding-top: 8px; }
.g-styles { width: 506px; padding-left: 10px; display: flex; }
.g-tools { width: 204px; display: flex; padding-left: 5px; }
.g-find { width: 176px; display: flex; padding-left: 11px; border: 0; }
.bigbtn { display: flex; flex-direction: column; align-items: center; white-space: nowrap; font-size: 17.5px; padding-top: 4px; }
.bigi { height: 34px; width: 36px; margin-bottom: 6px; }
.bigbtn span { line-height: 24px; }
.paste { align-items: flex-start; overflow: hidden; width: 50px; }
.paste .bigi { margin-left: 0; }
.clipl { margin-left: -2px; }
.brush { width: 70px; margin-left: -8px; }
.brush span { white-space: nowrap; }
.cc { width: 84px; margin-left: 8px; }
.ccrow { height: 38px; display: flex; align-items: center; color: #bbb; font-size: 16.5px; gap: 8px; white-space: nowrap; }
.ccrow + .ccrow { margin-top: 0; }
.cci { width: 24px; height: 24px; }
.row { height: 38px; display: flex; align-items: center; }
.row + .row { margin-top: 2px; }
.g-font .row + .row { margin-left: -2px; }
.gap1 { gap: 1px; }
.psort { margin-left: 3px; }
.pr2 .b { width: 37px; }
.pr2 .b.dd { width: 50px; }
.b { width: 38px; height: 34px; display: flex; align-items: center; justify-content: center; flex: none; color: #555; position: relative; }
.dd { width: 50px; justify-content: flex-start; }
.dd > :first-child { width: 38px; text-align: center; flex: none; }
.dd .i { width: 24px; margin: 0 7px; flex: none; }
.dd > svg.i:first-child { width: 24px; }
.dd .caret { margin-left: 3px; }
.pr2 .sel { background: #bdbdbd; border-radius: 6px; width: 34px; margin-right: 2px; }
.i { width: 24px; height: 24px; }
.combo { width: 284px; height: 33px; margin-left: 3px; margin-right: 4px; background: #fff; border: 1px solid #ddd; border-radius: 6px; display: flex; flex: none; font-size: 18px; color: #444; align-items: center; }
.cf { width: 168px; padding-left: 6px; border-right: 1px solid #ddd; line-height: 31px; display: flex; align-items: center; justify-content: space-between; padding-right: 5px; white-space: nowrap; }
.cs { flex: 1; padding-left: 3px; display: flex; align-items: center; justify-content: space-between; padding-right: 5px; white-space: nowrap; }
.gl { font-family: "Liberation Sans", sans-serif; font-size: 24px; color: #666; line-height: 28px; font-weight: 400; }
.gl sup { font-size: 12px; color: #4a90e8; line-height: 0; vertical-align: 10px; }
b.gl { color: #333; font-weight: 700; font-size: 22px; }
.it { font-style: italic; }
.a { font-size: 26px; }
.bl { font-size: 11px; color: #4a90e8; line-height: 0; }
.ul { border-bottom: 2px solid #8a8ae0; line-height: 22px; }
.strike { text-decoration: line-through; text-decoration-color: #d04040; }
.outl { color: #fff; -webkit-text-stroke: 1px #666; font-weight: 700; }
.ab { font-size: 20px; border-bottom: 5px solid #e6d820; line-height: 22px; color: #444; }
.blue { border-bottom: 4px solid #2020c8; line-height: 24px; }
.shade { background: #ddd; padding: 0 2px; }
.wen { display: flex; flex-direction: column; align-items: center; font-size: 18px; line-height: 15px; color: #444; }
.wen small { font-size: 11px; color: #4a90e8; line-height: 11px; }
.gallery { width: 398px; height: 72px; background: #fff; border: 1px solid #ddd; border-radius: 6px; display: flex; flex: none; font-family: "Liberation Sans", sans-serif; }
.st { display: flex; flex-direction: column; align-items: center; justify-content: space-between; padding: 3px 0 6px; flex: none; overflow: hidden; white-space: nowrap; }
.st0 { width: 92px; border: 2px solid #bbb; border-radius: 5px; }
.st1 { width: 97px; }
.st2 { width: 92px; }
.st3 { width: 94px; }
.smp { color: #000; display: block; line-height: 42px; }
.s0 { font-size: 17px; color: #333; letter-spacing: -.3px; }
.s1 { font-size: 36px; font-weight: 700; }
.s2 { font-size: 28px; font-weight: 700; color: #111; }
.s3 { font-size: 25px; font-weight: 700; color: #111; }
.sl { font-family: "Noto Sans CJK SC", sans-serif; font-size: 16.5px; color: #666; line-height: 20px; }
.dark { color: #222; font-size: 17px; }
.gscroll { flex: 1; display: flex; flex-direction: column; align-items: center; font-size: 11px; color: #aaa; line-height: 23px; }
.newst { width: 90px; margin-left: 2px; }
.newst .bigi { width: 40px; height: 36px; margin-bottom: 4px; }
.w85 { width: 92px; }
.w75 { width: 72px; }
.g-tools .bigi, .g-find .bigi { width: 34px; height: 36px; margin-bottom: 4px; }

/* main */
.main { height: 832px; display: flex; flex: none; overflow: hidden; position: relative; }
.rail { width: 40px; background: #ededed; flex: none; padding-top: 4px; }
.rb { width: 32px; height: 46px; margin-bottom: 6px; overflow: hidden; display: flex; align-items: center; justify-content: flex-end; padding-right: 12px; }
.rb.on { background: #bdbdbd; border-radius: 0 5px 5px 0; margin-bottom: 7px; padding-right: 4px; }
.ri { width: 26px; height: 24px; margin-right: -3px; }
.rb:not(.on) .ri { width: 20px; margin-right: 0; }
.panel { width: 348px; background: #f5f5f5; flex: none; padding: 0 14px; }
.phead { height: 54px; display: flex; align-items: center; padding-left: 18px; justify-content: space-between; padding-top: 16px; }
.ptitle { font-size: 27px; color: #555; line-height: 36px; margin-left: -3px; }
.pclose { width: 16px; height: 16px; margin-right: 14px; }
.ptools { height: 40px; display: flex; align-items: center; padding-left: 6px; gap: 15px; margin-bottom: 8px; }
.pt { width: 20px; height: 20px; }
.smart { display: flex; align-items: center; font-size: 17.5px; color: #666; margin-left: 34px; white-space: nowrap; gap: 7px; }
.blob { width: 22px; height: 16px; }
.tree { height: 715px; background: #f8f8f8; border: 1px solid #e8e8e8; border-radius: 7px; padding-top: 8px; margin-right: 1px; }
.node { height: 32.2px; line-height: 32px; font-size: 17.5px; color: #555; white-space: nowrap; position: relative; }
.l0 { padding-left: 40px; }
.l1 { padding-left: 64px; }
.l2 { padding-left: 87px; }
.op::before { content: ""; position: absolute; top: 11px; width: 7px; height: 7px; border-right: 1.5px solid #666; border-bottom: 1.5px solid #666; transform: rotate(45deg); }
.l0.op::before { left: 20px; }
.l1.op::before { left: 44px; }
.cur { background: #c5d5ee; margin-left: 57px; margin-right: 11px; padding-left: 30px; }
.node b { font-weight: 700; letter-spacing: .5px; }
.gutter { width: 55px; flex: none; background: linear-gradient(90deg, #ebebeb 0, #e8e8e8 60%, #c8c8c8 100%); }
.doc { width: 1395px; flex: none; background: #cdecd0; padding: 0 0 0 212px; margin: 0; height: 852px; margin-top: -20px; overflow: hidden; clip-path: inset(20px 0 0 0); }
.ln { font-size: 24px; line-height: 36px; letter-spacing: .3px; color: #222; font-weight: 300; white-space: nowrap; position: relative; top: -2px; }
.fig { position: relative; width: 758px; height: 574px; background: #fff; margin: 39px 0 40px -1px; font-size: 20px; }
.mgr { position: absolute; left: 25px; width: 103px; height: 211px; border-radius: 14px; background: linear-gradient(#f8a0ac, #f0788c 45%, #de2140); color: #ffdfe3; font-size: 21px; font-weight: 500; line-height: 26px; display: flex; align-items: center; justify-content: center; text-align: center; box-shadow: 0 2px 4px rgba(0,0,0,.25); }
.m1 { top: 8px; }
.m2 { top: 327px; }
.res { position: absolute; left: 398px; width: 182px; border-radius: 10px; background: linear-gradient(#a8a8a8, #6e6e6e 45%, #000); color: #e4e4e4; font-size: 21px; font-weight: 500; display: flex; align-items: center; justify-content: center; box-shadow: 0 2px 3px rgba(0,0,0,.3); white-space: nowrap; }
.r1 { top: 27px; height: 65px; }
.r2 { top: 151px; height: 67px; }
.r3 { top: 330px; height: 66px; }
.r4 { top: 442px; height: 66px; }
.arrows { position: absolute; left: 0; top: 0; width: 758px; height: 573px; }
.lb { position: absolute; left: 199px; line-height: 26px; color: #333; font-weight: 400; white-space: nowrap; }
.a1 { top: 14px; }
.a2 { top: 74px; }
.a3 { top: 139px; }
.a4 { top: 189px; }
.a5 { top: 319px; }
.a6 { top: 372px; }
.a7 { top: 437px; }
.a8 { top: 496px; left: 208px; }
.ph { position: absolute; writing-mode: vertical-rl; font-size: 20px; letter-spacing: 2px; color: #333; line-height: 22px; font-weight: 400; }
.p1 { left: 685px; top: 32px; }
.p2 { left: 699px; top: 336px; }
.li { display: flex; position: relative; padding-left: 47px; margin-top: 1px; word-spacing: 0; }
.dot { position: absolute; left: 1px; top: 9px; width: 14px; height: 14px; border-radius: 50%; background: #000; }
.vbar { width: 72px; flex: none; background: linear-gradient(90deg, #c9c9c9 0, #e6e6e6 25%, #e9e9e9 100%); padding: 28px 0 0 52px; position: relative; }
.track { width: 20px; height: 732px; background: #e2e2e2; position: relative; }
.thumb { position: absolute; left: 0; top: 394px; width: 20px; height: 47px; background: #fafafa; border: 1px solid #bbb; border-radius: 10px; }
.sa { position: absolute; left: 0; width: 20px; text-align: center; font-size: 12px; line-height: 12px; color: #888; }
.sat { left: 52px; top: 8px; }
.sa0 { top: 6px; }
.sa1 { top: 701px; }
.sa2 { top: 725px; }
.sa3 { top: 755px; left: 5px; width: 10px; height: 8px; border: 1px solid #888; }
.sa4 { top: 778px; }
.rtools { flex: 1; background: #efefef; position: relative; display: flex; flex-direction: column; align-items: center; padding: 18px 0 0 0; }
.rline { width: 24px; height: 1px; background: #ccc; margin-bottom: 34px; }
.rt { width: 24px; height: 22px; margin-bottom: 30.9px; }
.rmore { position: absolute; left: 2px; right: 0; bottom: 0; height: 17px; background: #b8b8b8; display: flex; justify-content: center; align-items: center; }
.rmi { width: 20px; height: 8px; }

/* status */
.status { height: 42px; flex: none; display: flex; align-items: center; background: #f4f4f4; font-size: 17.5px; color: #666; border-bottom: 2px solid #6f8088; position: relative; }
.si { display: flex; align-items: center; height: 30px; padding: 0 14px; border-right: 1px solid #e2e2e2; white-space: nowrap; gap: 6px; }
.first { margin-left: -6px; width: 127px; padding: 0 0 0 1px; font-size: 17px; }
.si:nth-child(2) { width: 134px; padding-left: 16px; }
.si:nth-child(3) { width: 128px; }
.last { border: 0; padding-left: 19px; gap: 7px; }
.sti { width: 22px; height: 20px; }
.ok { color: #6aaa50; }
.sright { margin-left: auto; display: flex; align-items: center; height: 100%; padding-right: 216px; }
.vi { width: 22px; height: 22px; margin-right: 15px; }
.vis { width: 32px; height: 36px; background: #c8c8c8; border-radius: 5px; display: flex; align-items: center; justify-content: center; margin: 0 12px 0 -6px; }
.vi2 { width: 22px; height: 22px; }
.st-vr { height: 28px; margin: 0 17px 0 10px; }
.zoom { white-space: nowrap; font-size: 17px; }
.minus { width: 16px; height: 3px; background: #555; margin-left: 20px; }
.zline { width: 82px; height: 1.5px; background: #888; margin-left: 16px; }

/* overlays */
.ime { position: absolute; left: 1760px; top: 1101px; width: 216px; height: 31px; background: #fff; border: 1px solid #dde; display: flex; align-items: center; padding-left: 7px; z-index: 3; }
.ime-u { width: 22px; height: 26px; }
.ime-z { width: 24px; margin-left: 8px; color: #2f6fc4; font-size: 20px; font-weight: 500; line-height: 26px; }
.ime-i { width: 20px; height: 20px; }
.im1 { margin-left: 6px; }
.im2 { width: 24px; margin-left: 7px; }
.im3 { width: 22px; height: 24px; margin-left: 7px; }
.ime-p { width: 20px; margin-left: 8px; color: #2f6fc4; font-size: 20px; line-height: 20px; font-weight: 700; }
.meter { position: absolute; left: 1962px; top: 883px; width: 14px; height: 87px; background: #3a4048; border-radius: 5px 0 0 5px; padding: 8px 0 8px 4px; }
.mbar { display: block; width: 10px; height: 100%; background: repeating-linear-gradient(#0000 0 1px, #0003 1px 2px), linear-gradient(#555 0 30%, #d8d050 30% 60%, #5cb88a 60%); }
.ink { position: absolute; left: 0; top: 0; width: 2000px; height: 1200px; pointer-events: none; }
.ink-lines { fill: none; stroke: #e00008; stroke-width: 6.5; stroke-linecap: round; stroke-linejoin: round; }

/* watermark */
.wm { height: 68px; display: flex; align-items: center; padding-left: 17px; padding-top: 8px; }
.bl-logo { width: 76px; font-family: "Liberation Sans", sans-serif; font-size: 25px; font-weight: 700; color: #6a6a6a; letter-spacing: -.4px; line-height: 36px; }
.wm-t { font-family: Roboto, sans-serif; font-size: 23.6px; color: #565656; white-space: nowrap; }
```
